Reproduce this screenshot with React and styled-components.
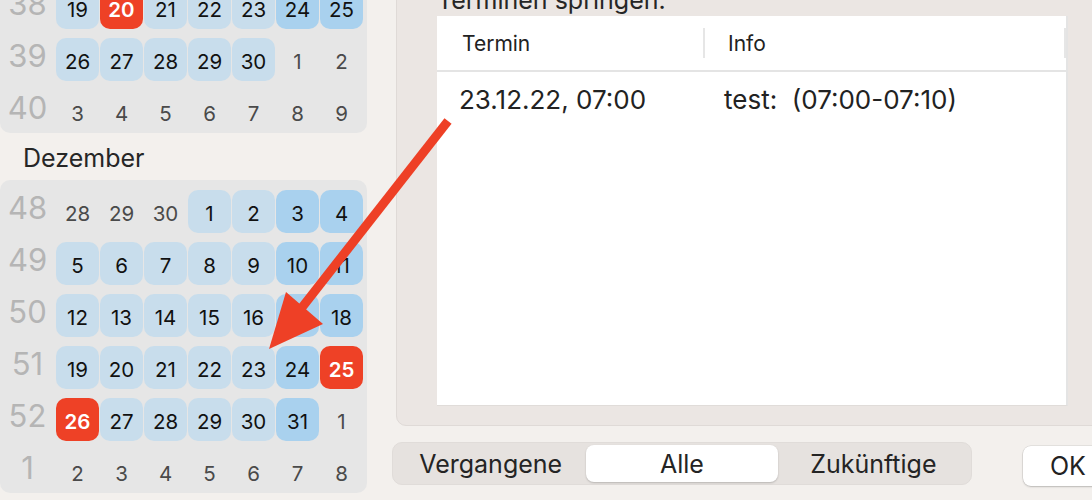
import React from 'react'
import styled, { createGlobalStyle } from 'styled-components'

const GlobalStyle = createGlobalStyle`
  html, body {
    margin: 0;
    padding: 0;
  }
  body {
    background: #f3f0ed;
    font-family: Inter, "Noto Sans", sans-serif;
    color: #222;
    overflow: hidden;
  }
`

// c = current month, w = weekend, r = holiday / today, o = other month
const september = [
  { week: 38, days: [[19, 'c'], [20, 'r'], [21, 'c'], [22, 'c'], [23, 'c'], [24, 'w'], [25, 'w']] },
  { week: 39, days: [[26, 'c'], [27, 'c'], [28, 'c'], [29, 'c'], [30, 'c'], [1, 'o'], [2, 'o']] },
  { week: 40, days: [[3, 'o'], [4, 'o'], [5, 'o'], [6, 'o'], [7, 'o'], [8, 'o'], [9, 'o']] },
]

const december = [
  { week: 48, days: [[28, 'o'], [29, 'o'], [30, 'o'], [1, 'c'], [2, 'c'], [3, 'w'], [4, 'w']] },
  { week: 49, days: [[5, 'c'], [6, 'c'], [7, 'c'], [8, 'c'], [9, 'c'], [10, 'w'], [11, 'w']] },
  { week: 50, days: [[12, 'c'], [13, 'c'], [14, 'c'], [15, 'c'], [16, 'c'], [17, 'w'], [18, 'w']] },
  { week: 51, days: [[19, 'c'], [20, 'c'], [21, 'c'], [22, 'c'], [23, 'c'], [24, 'w'], [25, 'r']] },
  { week: 52, days: [[26, 'r'], [27, 'c'], [28, 'c'], [29, 'c'], [30, 'c'], [31, 'w'], [1, 'o']] },
  { week: 1, days: [[2, 'o'], [3, 'o'], [4, 'o'], [5, 'o'], [6, 'o'], [7, 'o'], [8, 'o']] },
]

const dayBg = { c: '#c8ddec', w: '#a9d1ee', r: '#ee4126', o: 'transparent' }
const dayColor = { c: '#111', w: '#111', r: '#fff', o: '#4a4a4a' }

function Month({ rows }) {
  return (
    <MonthPanel>
      <MonthGrid>
        {rows.map((row) => (
          <React.Fragment key={row.week}>
            <WeekNum>{row.week}</WeekNum>
            {row.days.map(([d, kind], i) => (
              <Day key={i} $kind={kind}>{d}</Day>
            ))}
          </React.Fragment>
        ))}
      </MonthGrid>
    </MonthPanel>
  )
}

export default function App() {
  return (
    <>
      <GlobalStyle />
      <Page>
        <Sidebar>
          <Month rows={september} />
          <MonthLabel>Dezember</MonthLabel>
          <Month rows={december} />
        </Sidebar>

        <Main>
          <Panel>
            <Caption>Terminen springen.</Caption>
            <Table>
              <HeaderRow>
                <HeaderCell>Termin</HeaderCell>
                <HeaderCell $pad={23}>Info</HeaderCell>
              </HeaderRow>
              <Row>
                <Cell>23.12.22, 07:00</Cell>
                <Cell $pad={19}>test:&nbsp; (07:00-07:10)</Cell>
              </Row>
            </Table>
          </Panel>

          <BottomBar>
            <Segmented>
              <Segment>Vergangene</Segment>
              <Segment $active>Alle</Segment>
              <Segment>Zukünftige</Segment>
            </Segmented>
            <OkButton>OK</OkButton>
          </BottomBar>
        </Main>

        <Arrow viewBox="0 0 1092 500">
          <line x1="448" y1="121" x2="300" y2="310" stroke="#ee4026" strokeWidth="9" />
          <polygon points="269,349 286,292 323,324" fill="#ee4026" />
        </Arrow>
      </Page>
    </>
  )
}

const Page = styled.div`
  position: relative;
  display: flex;
  width: 1092px;
  height: 500px;
  overflow: hidden;
`

const Sidebar = styled.div`
  width: 368px;
  flex-shrink: 0;
  margin-top: -24px;
`

const MonthPanel = styled.div`
  width: 367px;
  background: #e6e6e6;
  border-radius: 10px;
  padding-top: 10px;
  box-sizing: border-box;
`

const MonthGrid = styled.div`
  display: grid;
  grid-template-columns: 55px repeat(7, 43px);
  grid-auto-rows: 43px;
  column-gap: 1px;
  row-gap: 9px;
`

const WeekNum = styled.div`
  display: flex;
  align-items: center;
  justify-content: center;
  padding-bottom: 8px;
  font-size: 31px;
  color: #b5b5b5;
`

const Day = styled.div`
  display: flex;
  align-items: center;
  justify-content: center;
  padding-top: 3px;
  border-radius: 10px;
  font-size: 20.5px;
  background: ${(p) => dayBg[p.$kind]};
  color: ${(p) => dayColor[p.$kind]};
  font-weight: ${(p) => (p.$kind === 'r' ? 600 : 400)};
`

const MonthLabel = styled.div`
  height: 47px;
  box-sizing: border-box;
  padding: 3px 0 0 23px;
  line-height: 44px;
  font-size: 25px;
  color: #262626;
`

const Main = styled.div`
  width: 720px;
  flex-shrink: 0;
  margin-left: 24px;
  display: flex;
  flex-direction: column;
`

const Panel = styled.div`
  margin: -16px 0 0 4px;
  padding: 0 0 19px 40px;
  background: #ebe6e3;
  border: 1px solid #dfdad7;
  border-radius: 10px;
`

const Caption = styled.div`
  height: 30px;
  line-height: 30px;
  font-size: 25px;
  color: #262626;
`

const Table = styled.div`
  margin-top: 1px;
  width: 631px;
  height: 390px;
  box-sizing: border-box;
  background: #fff;
  border-right: 2px solid #e4e4e4;
  border-bottom: 1px solid #e0dcd9;
`

const HeaderRow = styled.div`
  display: grid;
  grid-template-columns: 268px 1fr;
  height: 56px;
  box-sizing: border-box;
  border-bottom: 2px solid #e4e4e4;
`

const HeaderCell = styled.div`
  position: relative;
  display: flex;
  align-items: center;
  padding-left: ${(p) => p.$pad ?? 25}px;
  font-size: 21px;
  color: #222;

  &::after {
    content: "";
    position: absolute;
    right: 0;
    top: 12px;
    bottom: 12px;
    width: 2px;
    background: #e6e6e6;
  }
`

const Row = styled.div`
  display: grid;
  grid-template-columns: 268px 1fr;
  height: 54px;
`

const Cell = styled.div`
  display: flex;
  align-items: center;
  padding-left: ${(p) => p.$pad ?? 22}px;
  font-size: 26px;
  color: #222;
`

const BottomBar = styled.div`
  display: flex;
  align-items: flex-start;
  gap: 51px;
  margin-top: 16px;
`

const Segmented = styled.div`
  width: 580px;
  height: 43px;
  flex-shrink: 0;
  box-sizing: border-box;
  padding: 2px;
  display: grid;
  grid-template-columns: repeat(3, 1fr);
  background: #e6e2df;
  border-radius: 10px;
  border: 1px solid #e0dcd9;
`

const Segment = styled.div`
  display: flex;
  align-items: center;
  justify-content: center;
  border-radius: 8px;
  font-size: 25px;
  color: #242424;
  background: ${(p) => (p.$active ? '#fff' : 'transparent')};
  box-shadow: ${(p) => (p.$active ? '0 1px 2px rgba(0,0,0,0.2)' : 'none')};
`

const OkButton = styled.div`
  margin-top: 4px;
  width: 92px;
  height: 40px;
  flex-shrink: 0;
  box-sizing: border-box;
  padding-left: 27px;
  display: flex;
  align-items: center;
  background: #fff;
  border-radius: 8px;
  box-shadow: 0 0 0 0.5px rgba(0,0,0,0.12), 0 1px 2px rgba(0,0,0,0.18);
  font-size: 25px;
  color: #222;
`

const Arrow = styled.svg`
  position: absolute;
  left: 0;
  top: 0;
  width: 1092px;
  height: 500px;
  pointer-events: none;
`
